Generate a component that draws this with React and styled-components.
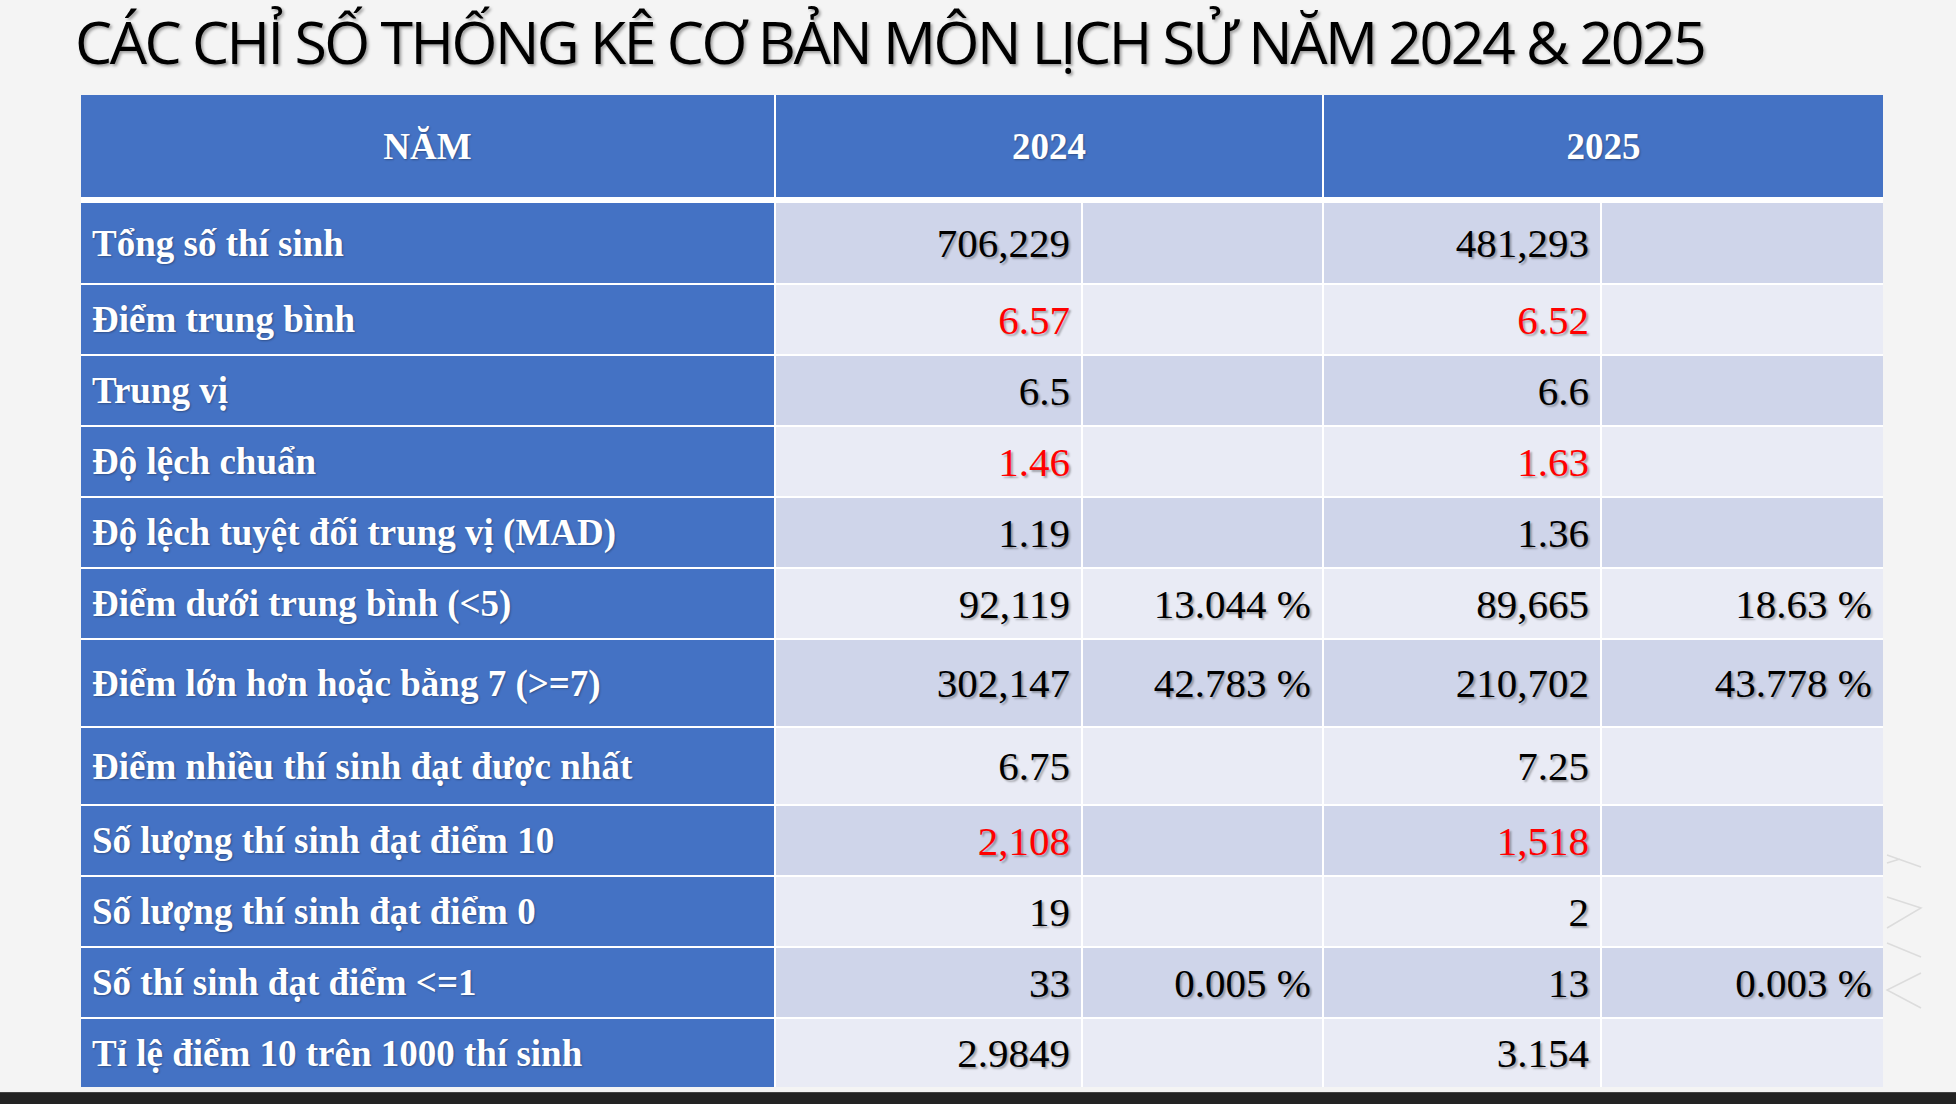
import styled, { createGlobalStyle } from "styled-components";

const GlobalStyle = createGlobalStyle`
  html, body {
    margin: 0;
    padding: 0;
    background: #f4f4f4;
  }
`;

const Page = styled.div`
  position: relative;
  height: 100vh;
  display: flex;
  flex-direction: column;
  overflow: hidden;
  background: #f4f4f4;
`;

const Title = styled.h1`
  margin: 11px 0 0 75px;
  height: 60px;
  line-height: 60px;
  font-family: "Open Sans", sans-serif;
  font-weight: 400;
  font-size: 59px;
  letter-spacing: -2.5px;
  color: #000;
  white-space: nowrap;
  text-shadow: 2px 2px 3px rgba(0, 0, 0, 0.35);
`;

const Table = styled.div`
  margin: 24px 0 0 81px;
  width: 1802px;
  display: flex;
  flex-direction: column;
  gap: 6px;
  background: #fff;
`;

const Grid = styled.div`
  display: grid;
  grid-template-columns: 693px 305px 239px 276px 281px;
  gap: 2px;
  background: #fff;
`;

const HeadCell = styled.div`
  grid-column: ${(p) => p.$span || "auto"};
  height: 102px;
  display: flex;
  align-items: center;
  justify-content: center;
  background: #4472c4;
  color: #fff;
  font-family: "Liberation Serif", "Times New Roman", serif;
  font-weight: 700;
  font-size: 37px;
  text-shadow: 1px 1px 2px rgba(0, 0, 0, 0.3);
`;

const Label = styled.div`
  height: ${(p) => p.$h}px;
  display: flex;
  align-items: center;
  padding-left: 11px;
  background: #4472c4;
  color: #fff;
  font-family: "Liberation Serif", "Times New Roman", serif;
  font-weight: 700;
  font-size: 37px;
  white-space: nowrap;
  text-shadow: 1px 1px 2px rgba(0, 0, 0, 0.3);
`;

const Value = styled.div`
  height: ${(p) => p.$h}px;
  display: flex;
  align-items: center;
  justify-content: flex-end;
  padding-right: 11px;
  background: ${(p) => (p.$dark ? "#cfd5ea" : "#e9ebf5")};
  color: ${(p) => (p.$red ? "#ff0000" : "#000")};
  font-family: "Liberation Serif", "Times New Roman", serif;
  font-size: 41px;
  white-space: nowrap;
  text-shadow: 2px 2px 2px rgba(0, 0, 0, 0.3);
`;

const Decor = styled.svg`
  position: absolute;
  left: 1884px;
  top: 850px;
`;

const Footer = styled.div`
  margin-top: auto;
  height: 11px;
  background: #232323;
  border-top: 1px solid #444;
`;

const rows = [
  { label: "Tổng số thí sinh", h: 80, v: ["706,229", "", "481,293", ""] },
  { label: "Điểm trung bình", h: 69, v: ["6.57", "", "6.52", ""], red: true },
  { label: "Trung vị", h: 69, v: ["6.5", "", "6.6", ""] },
  { label: "Độ lệch chuẩn", h: 69, v: ["1.46", "", "1.63", ""], red: true },
  { label: "Độ lệch tuyệt đối trung vị (MAD)", h: 69, v: ["1.19", "", "1.36", ""] },
  { label: "Điểm dưới trung bình (<5)", h: 69, v: ["92,119", "13.044 %", "89,665", "18.63 %"] },
  { label: "Điểm lớn hơn hoặc bằng 7 (>=7)", h: 86, v: ["302,147", "42.783 %", "210,702", "43.778 %"] },
  { label: "Điểm nhiều thí sinh đạt được nhất", h: 76, v: ["6.75", "", "7.25", ""] },
  { label: "Số lượng thí sinh đạt điểm 10", h: 69, v: ["2,108", "", "1,518", ""], red: true },
  { label: "Số lượng thí sinh đạt điểm 0", h: 69, v: ["19", "", "2", ""] },
  { label: "Số thí sinh đạt điểm <=1", h: 69, v: ["33", "0.005 %", "13", "0.003 %"] },
  { label: "Tỉ lệ điểm 10 trên 1000 thí sinh", h: 68, v: ["2.9849", "", "3.154", ""] },
];

export default function App() {
  return (
    <Page>
      <GlobalStyle />
      <Title>CÁC CHỈ SỐ THỐNG KÊ CƠ BẢN MÔN LỊCH SỬ NĂM 2024 &amp; 2025</Title>
      <Table>
        <Grid>
          <HeadCell>NĂM</HeadCell>
          <HeadCell $span="span 2">2024</HeadCell>
          <HeadCell $span="span 2">2025</HeadCell>
        </Grid>
        <Grid>
          {rows.map((r, i) => [
            <Label key={`l${i}`} $h={r.h}>
              {r.label}
            </Label>,
            ...r.v.map((val, j) => (
              <Value
                key={`v${i}-${j}`}
                $h={r.h}
                $dark={i % 2 === 0}
                $red={r.red && (j === 0 || j === 2)}
              >
                {val}
              </Value>
            )),
          ])}
        </Grid>
      </Table>
      <Decor width="40" height="165" viewBox="0 0 40 165">
        <g stroke="#dcdcdc" strokeWidth="1.5" fill="none">
          <path d="M3 5 L37 17 M3 13 L16 9" />
          <path d="M3 47 L37 58 L3 78" />
          <path d="M3 93 L37 107" />
          <path d="M37 123 L3 140 L37 158" />
        </g>
      </Decor>
      <Footer />
    </Page>
  );
}
